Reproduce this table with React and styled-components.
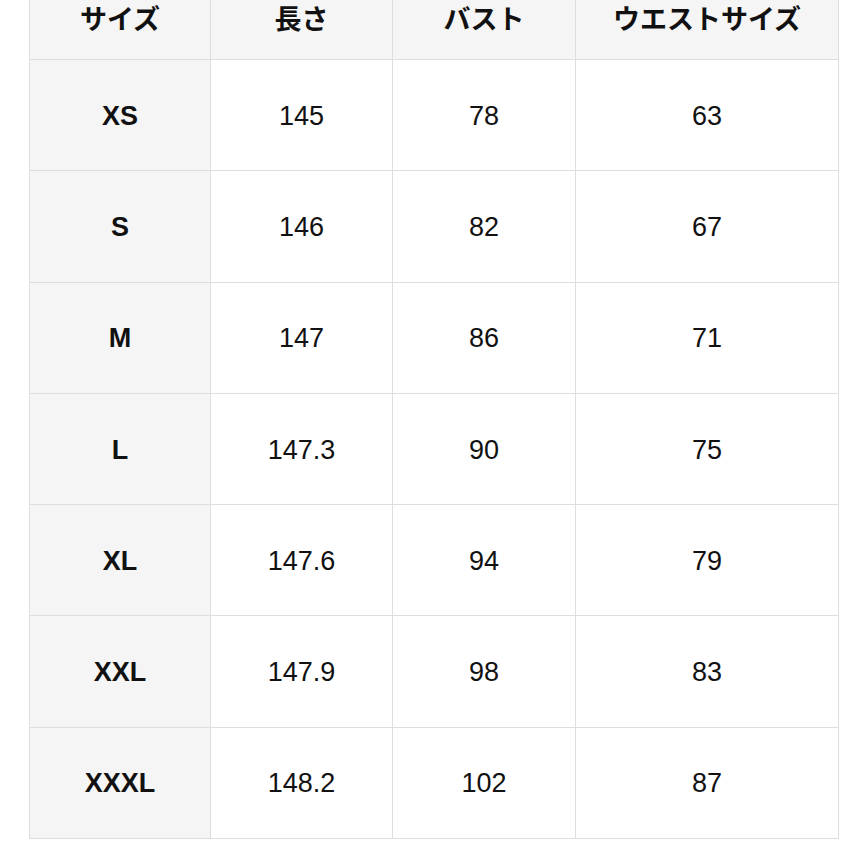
import React from 'react';
import styled, { createGlobalStyle } from 'styled-components';

const GlobalStyle = createGlobalStyle`
  html, body {
    margin: 0;
    padding: 0;
    background: #ffffff;
  }
  body {
    font-family: "Liberation Sans", Arial, "Noto Sans CJK JP", sans-serif;
    color: #111;
  }
`;

const rows = [
  { size: 'XS', length: '145', bust: '78', waist: '63' },
  { size: 'S', length: '146', bust: '82', waist: '67' },
  { size: 'M', length: '147', bust: '86', waist: '71' },
  { size: 'L', length: '147.3', bust: '90', waist: '75' },
  { size: 'XL', length: '147.6', bust: '94', waist: '79' },
  { size: 'XXL', length: '147.9', bust: '98', waist: '83' },
  { size: 'XXXL', length: '148.2', bust: '102', waist: '87' },
];

function App() {
  return (
    <Page>
      <GlobalStyle />
      <Table>
        <colgroup>
          <col style={{ width: 181 }} />
          <col style={{ width: 182 }} />
          <col style={{ width: 183 }} />
          <col style={{ width: 263 }} />
        </colgroup>
        <thead>
          <tr>
            <HeadCell>サイズ</HeadCell>
            <HeadCell>長さ</HeadCell>
            <HeadCell>バスト</HeadCell>
            <HeadCell>ウエストサイズ</HeadCell>
          </tr>
        </thead>
        <tbody>
          {rows.map((row) => (
            <BodyRow key={row.size}>
              <SizeCell>{row.size}</SizeCell>
              <Cell>{row.length}</Cell>
              <Cell>{row.bust}</Cell>
              <Cell>{row.waist}</Cell>
            </BodyRow>
          ))}
        </tbody>
      </Table>
    </Page>
  );
}

export default App;

const Page = styled.div`
  width: 868px;
  height: 868px;
  overflow: hidden;
  padding-left: 29px;
  box-sizing: border-box;
`;

const Table = styled.table`
  border-collapse: collapse;
  table-layout: fixed;
  width: 809px;
  margin-top: -1px;
`;

const HeadCell = styled.th`
  height: 59px;
  padding: 0 0 24px;
  box-sizing: border-box;
  background: #f5f5f5;
  border: 1px solid #dedede;
  font-family: "Noto Sans CJK JP", "Liberation Sans", sans-serif;
  font-weight: 700;
  font-size: 27px;
  line-height: 35px;
  text-align: center;
  vertical-align: middle;
  color: #111;
`;

const BodyRow = styled.tr`
  height: 111.3px;
`;

const Cell = styled.td`
  border: 1px solid #dedede;
  background: #ffffff;
  text-align: center;
  vertical-align: middle;
  font-size: 27px;
  color: #111;
  padding: 2px 0 0;
`;

const SizeCell = styled(Cell)`
  background: #f5f5f5;
  font-weight: 700;
`;
